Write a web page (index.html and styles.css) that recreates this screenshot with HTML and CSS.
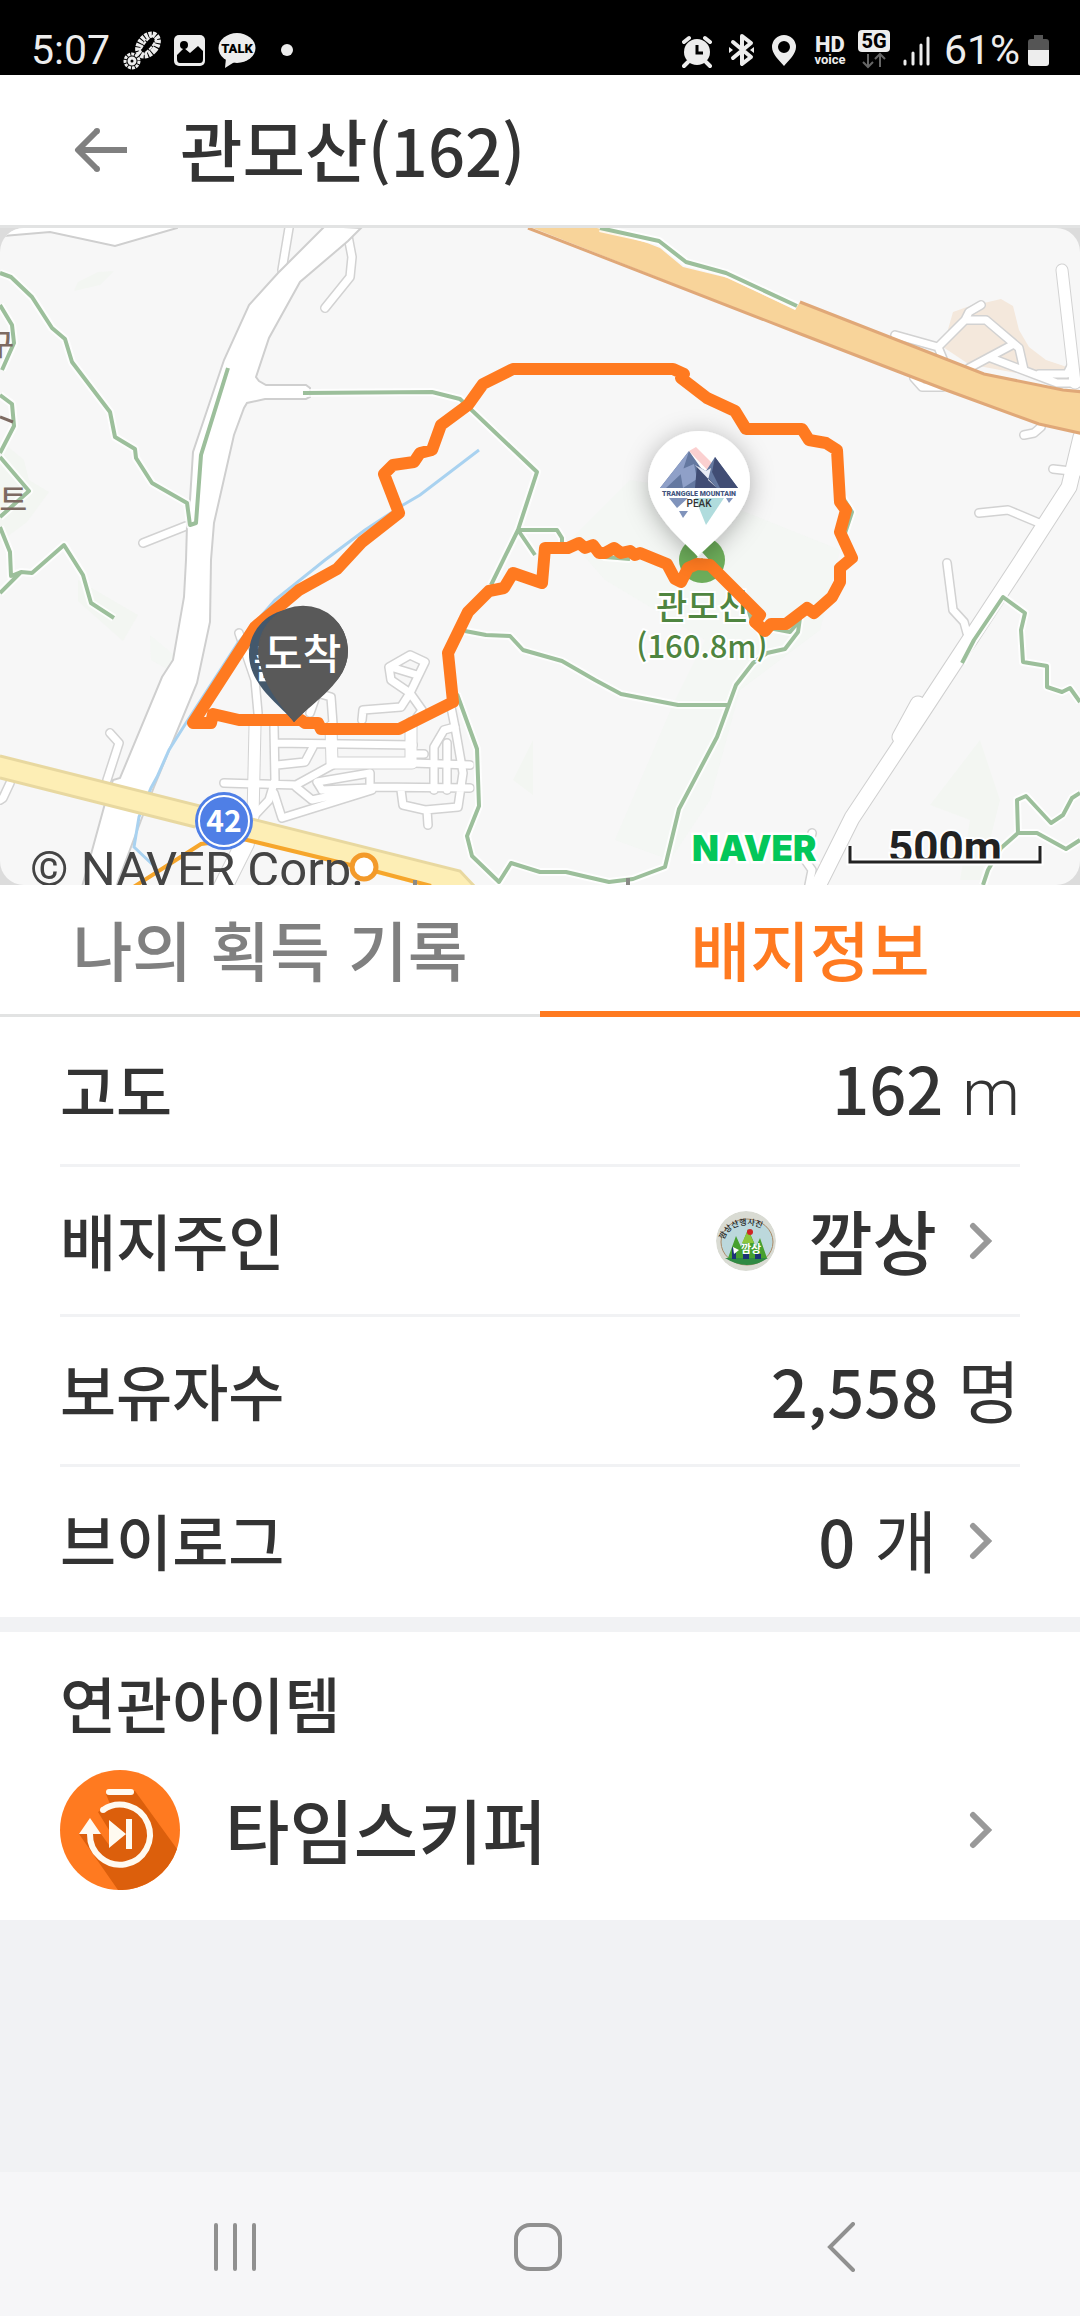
FILE: index.html
```html
<!DOCTYPE html>
<html lang="ko">
<head>
<meta charset="utf-8">
<meta name="viewport" content="width=device-width, initial-scale=1">
<title>관모산(162)</title>
<link rel="stylesheet" href="styles.css">
</head>
<body>
<div class="screen">
  <div class="status">
    <div class="status-group">
      <span class="status-text">5:07</span>
      <svg class="ic" width="38" height="40" viewBox="0 0 38 40">
        <g transform="rotate(40 25 15)" fill="none" stroke="#ededed">
          <ellipse cx="25" cy="15" rx="8" ry="12" stroke-width="6" stroke-dasharray="3 1"/>
          <path d="M23 4q-4 10 0 22M27 4q4 10 0 22" stroke-width="2" stroke-dasharray="4 1"/>
        </g>
        <circle cx="9" cy="31" r="7" fill="none" stroke="#ededed" stroke-width="3" stroke-dasharray="3 1"/>
        <circle cx="9" cy="31" r="3" fill="none" stroke="#ededed" stroke-width="3"/>
      </svg>
      <svg class="ic" width="31" height="40" viewBox="0 0 31 40">
        <rect y="5" width="31" height="31" rx="5" fill="#ededed"/>
        <circle cx="10" cy="15" r="4"/>
        <path d="M3 29v-4l7-7 6 5 8-7 5 5v8q0 4-3 4H6q-3 0-3-4z"/>
      </svg>
      <svg class="ic" width="38" height="40" viewBox="0 0 38 40">
        <ellipse cx="19" cy="18" rx="18.500" ry="15" fill="#ededed"/>
        <path d="M8 28L7 38l11-7z" fill="#ededed"/>
        <text class="talk" x="19" y="23">TALK</text>
      </svg>
      <span class="dot"></span>
    </div>
    <div class="status-group status-right">
      <svg class="ic" width="34" height="40" viewBox="0 0 34 40">
        <circle cx="15" cy="22" r="13" fill="#ededed"/>
        <path d="M2 12l5-4M23 8l5 4M6 32l-4 4M24 32l4 4" stroke="#ededed" stroke-width="4" stroke-linecap="round"/>
        <path d="M15 15v8h6" fill="none" stroke="#000" stroke-width="3"/>
      </svg>
      <svg class="ic" width="32" height="40" viewBox="0 0 32 40">
        <path d="M5 12l18 15-9 7V6l9 7L5 28" fill="none" stroke="#ededed" stroke-width="4" stroke-linejoin="round" stroke-linecap="round"/>
        <path d="M1 17l4 3-4 3zM26 17l-4 3 4 3z" fill="#ededed"/>
      </svg>
      <svg class="ic" width="30" height="40" viewBox="0 0 30 40">
        <path fill-rule="evenodd" fill="#ededed" d="M12 5a12 12 0 0 1 12 12c0 7-7 13-12 19C7 30 0 24 0 17A12 12 0 0 1 12 5zm0 6a6 6 0 1 0 0 12 6 6 0 0 0 0-12z"/>
      </svg>
      <svg class="ic" width="32" height="40" viewBox="0 0 32 40">
        <text class="hd" x="16" y="22">HD</text>
        <text class="voice" x="16" y="34">voice</text>
      </svg>
      <svg class="ic" width="32" height="40" viewBox="0 0 32 40">
        <rect width="32" height="22" rx="4" fill="#ededed"/>
        <text class="fiveg" x="16" y="18">5G</text>
        <path d="M10 24v13M5 32l5 5 5-5M22 37V24M17 29l5-5 5 5" fill="none" stroke="#666" stroke-width="2"/>
      </svg>
      <svg class="ic" width="30" height="40" viewBox="0 0 30 40">
        <path d="M3 31v3M11 23v11M19 15v19M26 8v26" stroke="#ededed" stroke-width="3" stroke-linecap="round"/>
      </svg>
      <span class="battery">
        <span class="status-text">61%</span>
        <svg class="ic" width="21" height="40" viewBox="0 0 21 40">
          <path d="M6 5h9v4h3q3 0 3 3v8H0v-8q0-3 3-3h3z" fill="#555"/>
          <path d="M0 20h21v13q0 3-3 3H3q-3 0-3-3z" fill="#ededed"/>
        </svg>
      </span>
    </div>
  </div>

  <header class="header">
    <button class="back" type="button" aria-label="뒤로">
      <svg width="54" height="44" viewBox="0 0 54 44"><path d="M53 22H5M23 3L4 22l19 19" fill="none" stroke="#808080" stroke-width="6" stroke-linejoin="round"/><path d="M23 3h0M23 41h0" stroke="#808080" stroke-width="6" stroke-linecap="round"/></svg>
    </button>
    <h1 class="title">관모산<span class="num">(162)</span></h1>
  </header>

  <div class="map">
    <svg class="map-svg" viewBox="0 228 1080 657" preserveAspectRatio="xMidYMid slice" role="img" aria-label="관모산 등산 지도">
      <defs>
        <filter id="shadow" x="-50%" y="-50%" width="200%" height="200%"><feDropShadow dx="0" dy="4" stdDeviation="12" flood-color="#000" flood-opacity="0.3"/></filter>
        <g id="lanes">
          <path d="M289 228l-7 42M348 236l4 21-2 20-25 31M143 543l43-17M110 733l9 10-12 37M10 783l-7 15-3 2"/>
          <path d="M239 633l16 47 3 33M274 727l1 53-6 20-16 17M275 743l138 2M277 765l28-3 8-15M224 783l72 2 40-22h77l57 2M413 754h11"/>
          <path d="M296 787l16 13 60-13 98 1M274 793l8 25 90-28M322 790l-5-8 53-9v15l-48 2M401 790l2 15 22 5 33-3 5-34-8-46-4-20M427 810l1 15"/>
          <path d="M362 720l1-10 38-3 9-14-19-13-2-13 21-12 15 7-15 31 12 17-9 13M394 668l23 7M434 790v-43l10-17 11-3M447 790v-47M310 713l7-20 14 4 2 27"/>
          <path d="M981 305l-12 7-4 8-27 27-43-12M938 347l5 12M965 320h21l33 28 5 22M969 368l43-23M991 358l66 25h23M1039 374h28l4-8M914 378l8 9h21M1024 435l10-2 7-6"/>
          <path d="M1053 469l27 3M979 513l29-3 31 13M947 563l6 47 11 12 3 11M812 833l-7 27 7 10-3 15"/>
        </g>
        <g id="avenues">
          <path d="M255 726l-2 91M331 727l1 36M411 723v40M332 763h80M1062 270l13 113"/>
        </g>
        <g id="trails">
          <path d="M0 273l11 4 21 20 20 31 13 11 7 23 38 50 5 25 20 12 1 9 16 25 35 20 3 22 6-2 5-68 27-87"/>
          <path d="M0 305l12 20 2 18-12 27M0 395l12 9 2 22-14 27M0 457l29 34-29 26M0 527l10 25 1 24 10-4 11 1 32-28 19 30 8 28 23 15M21 572l-21 21"/>
          <path d="M303 393l129-1 28 7 77 73-19 58-27 55M518 530l39 0 5 8v12M518 530l17 25M600 228l59 13 27 21 40 11 71 33"/>
          <path d="M465 631l21 4 24 1 13 14 39 11 33 19 26 14 57 11h50M747 605l6 20 37 7 10-12M800 618l-2 14-13 17-18 4-14 10-17 22-19 52-38 72-14 58-32 12-24 3-43-10h-26l-29-9-12 19-27-26-5-20 12-30-2-57-20-55"/>
          <path d="M962 663l12-23 29-43 22 16-4 17 2 32 24 4v21l15 5 8-4 10 14M1080 793l-8 5-9 17-12 8-25-27-9 4 1 33h19l29 16 14-9M1018 833l-17 15-13 22-5 15"/>
          <path d="M838 490l14 22-8 24M590 548l15 9 25 2"/>
        </g>
      </defs>

      <rect y="228" width="1080" height="657" fill="#f7f7f7"/>
      <g fill="#f3f6f2">
        <path d="M78 282l20-10 16-1-14 14-26 6zM0 440l24 20 5 20 20 12-22 30-27 20zM78 580l60 35-15 26-45-40z"/>
        <path d="M150 635l24 20-5 15-18-10zM570 540l60-60 60 10 150 60-20 80-80 60-30 110-40 60-55-20 60-140 30-60-100-60z" opacity=".8"/>
        <path d="M980 740l20 60-20 80h-20l10-60-40-15zM513 780l20-40v55z"/>
      </g>
      <path d="M943 347l10-35 14-5 34-8 12 7 6 24 10 17 17 13 21 7 5 16-88-16-17-4z" fill="#f4e8dc"/>

      <g fill="none" stroke-linecap="round" stroke-linejoin="round">
        <use href="#lanes" stroke="#d2d2d2" stroke-width="10"/>
        <use href="#avenues" stroke="#d2d2d2" stroke-width="13"/>
        <path d="M1081 437l-12 50-47 73-103 157-67 101-35 70M918 704l-18 33" stroke="#cfcfcf" stroke-width="17"/>
        <use href="#lanes" stroke="#fff" stroke-width="7"/>
        <use href="#avenues" stroke="#fff" stroke-width="11"/>
        <path d="M1081 437l-12 50-47 73-103 157-67 101-35 70M918 704l-18 33" stroke="#fff" stroke-width="15"/>
        <path d="M245 843l-22 44" stroke="#d2d2d2" stroke-width="20"/>
        <path d="M245 843l-22 44" stroke="#fff" stroke-width="18"/>
      </g>
      <path d="M3 236l47-4 65 14 62-18v-4H10z" fill="#fff" stroke="#cfcfcf" stroke-width="2"/>
      <path d="M325 226l-38 38-9 9-29 32-25 55-31 92-3 48-3 25-1 35-2 37-11 63-11 17-42 101-7 2-9 27-22 80h34l27-72 11-28 43-104 13-61 1-62 3-37 20-88 10-27 3-5 18-4h41l4-2v-9l-4-3h-40l-7-4-3-4 13-39 31-56 48-41 13-13z" fill="#fff" stroke="#cfcfcf" stroke-width="2"/>

      <path d="M479 450l-59 45-17 10-38 25-40 30-50 40-37 43-52 80-17 27-12 27-6 11-12 29-5 30 19 18" fill="none" stroke="#a9d2f0" stroke-width="3"/>
      <path d="M528 226l270 107 148 57 93 34 45 10v-42l-21-2-79-16-184-72-5 8-67-32-45-11-23-19-13-5-60-18z" fill="#f8d49a"/>
      <path d="M528 228l270 105 148 57 93 34 45 10M800 302l184 72 79 16 21 2" fill="none" stroke="#e0a878" stroke-width="3"/>
      <path d="M0 756l460 115 15 16h-48L195 827 0 778z" fill="#fdeeb5"/>
      <path d="M0 756l460 115 15 16M0 778l195 49" fill="none" stroke="#e8d8a0" stroke-width="3"/>
      <path d="M132 888l69-44 42-5 120 29 68 18" fill="none" stroke="#f6a62c" stroke-width="4"/>
      <circle cx="364" cy="867" r="12" fill="#fff" stroke="#f39a2a" stroke-width="5"/>
      <g fill="none" stroke-linejoin="round">
        <use href="#trails" stroke="#fff" stroke-width="8" opacity=".8"/>
        <use href="#trails" stroke="#9cbf9b" stroke-width="4"/>
      </g>
      <path d="M0 417l13 5" stroke="#7d6a62" stroke-width="3"/>
      <path d="M415 880v6M628 878v8" stroke="#8a8a86" stroke-width="4"/>
      <text class="place" x="14" y="355">구</text>
      <text class="place" x="27" y="510">트</text>

      <circle cx="224" cy="821" r="29" fill="#4f7fe6"/>
      <circle cx="224" cy="821" r="25" fill="none" stroke="#fff" stroke-width="2"/>
      <text class="route-no" x="224" y="832">42</text>

      <circle cx="702" cy="560" r="23" fill="#6dad5a"/>
      <path d="M684 575l18-20 18 20" fill="none" stroke="#fff" stroke-width="4"/>
      <text class="peak" x="703" y="619">관모산</text>
      <text class="peak peak-height" x="702" y="658">(160.8m)</text>

      <path d="M513 369l-30 15-15 21-27 20-9 25-12 3-6 9-21 3-9 9 15 39-37 29-25 27-38 21-44 37-62 96h18l2-9 26 6h62l4 3h13l3 6h78l54-27-5-49 20-41 21-21 15-3 9-15 29 10 3-35h23l11-5 6 5 8-3 6 8h6l9-5 7 5 9-2 5 4 5-2 27 11 8 15 6 3 7-14 9-4 13 1 50 50-5 7 10 9 6-7h15l21-16 7 5 18-16 8-15v-14l12-10-12-26 6-22-6-8-3-52-11-7-17-3-7-11h-56l-11-18-28-13-26-20 3-4-11-5z" fill="none" stroke="#ff7a20" stroke-width="12" stroke-linejoin="round"/>

      <path d="M294 722C282 706 249 686 249 654a45 45 0 0 1 90 0c0 32-33 52-45 68z" fill="#43586c"/>
      <text class="flag" x="253" y="678">출</text>
      <path d="M294 722l-26-43a45 45 0 1 1 70 0z" fill="#595959"/>
      <path d="M294 722C284 708 259 685 259 651a44.500 44.500 0 0 1 89 0c0 31-34 50-54 71z" fill="#595959"/>
      <text class="flag" x="264" y="669">도착</text>

      <path filter="url(#shadow)" d="M698 557c-6-9-50-41-50-75a51 51 0 0 1 102 0c0 34-46 66-52 75z" fill="#fff"/>
      <path d="M689 451l7-4 22 22-4 8z" fill="#fbd0d0"/>
      <path d="M660 488l29-37 12 17 5 3 9-14 23 31z" fill="#6478a0"/>
      <path d="M689 451l-7 22-16 15h-6zM680 470l14-6 3 15-14 9z" fill="#8fa0c8"/>
      <path d="M697 465l20 23h-22zM715 457l23 31h-18l-8-16z" fill="#414d74"/>
      <path d="M706 471l5-3-3 12 9 8-22-23z" fill="#e9ecf5"/>
      <path d="M669 498h19l-11 10zM679 511h9l-5 7zM726 498h7l-4 5z" fill="#8093bb"/>
      <path d="M695 498h29l-18 27z" fill="#b0dcdd"/>
      <text class="logo-name" x="699" y="496">TRANGGLE MOUNTAIN</text>
      <text class="logo-peak" x="699" y="507">PEAK</text>

      <text class="naver" x="692" y="861">NAVER</text>
      <text class="scale" x="945" y="863">500m</text>
      <path d="M886 859h118v4H886z" fill="#f7f7f7" opacity=".7"/>
      <path d="M850 846v16h190v-16" fill="none" stroke="#fff" stroke-width="7"/>
      <path d="M850 846v16h190v-16" fill="none" stroke="#222" stroke-width="3"/>
      <text class="credit" x="30" y="886">© NAVER Corp.</text>
    </svg>
  </div>

  <div class="tabs" role="tablist">
    <button class="tab" type="button" role="tab" aria-selected="false">나의 획득 기록</button>
    <button class="tab tab-active" type="button" role="tab" aria-selected="true">배지정보</button>
  </div>

  <main>
    <section class="card">
      <div class="row"><span class="label">고도</span><span class="value"><span class="num">162</span> <span class="unit-m">m</span></span></div>
      <a class="row" href="#owner"><span class="label">배지주인</span>
        <svg class="avatar" width="60" height="60" viewBox="0 0 60 60">
          <circle cx="30" cy="30" r="30" fill="#d9dbd3"/>
          <ellipse cx="31" cy="31" rx="26" ry="23" fill="#bcd8dc" stroke="#a98a68" stroke-width="1"/>
          <path d="M9 47q22 14 43 0z" fill="#2f8a43"/>
          <path d="M12 47l8-22 5 11 7-18 8 18 4-9 7 20z" fill="#46a02f"/>
          <path d="M26 32l6-13 6 13z" fill="#8cc63c"/>
          <circle cx="34" cy="21" r="3" fill="#d02525"/>
          <path d="M16 36l4 3v9h-4zM27 43h6v5h-6zM39 43h6v5h-6z" fill="#1d3277"/>
          <path d="M17 36l6 3-5 4z" fill="#fff"/>
          <path id="arc" d="M8 29Q13 14 31 14T55 29" fill="none"/>
          <text class="av-arc"><textPath href="#arc">깜상산행사진</textPath></text>
          <text class="av-mid" x="35" y="42">깜상</text>
        </svg>
        <span class="value name">깜상</span>
        <svg class="chev" width="24" height="38" viewBox="0 0 24 38"><path d="M4 4l15 15L4 34" /></svg></a>
      <div class="row"><span class="label">보유자수</span><span class="value"><span class="num">2,558</span> <span class="unit">명</span></span></div>
      <a class="row" href="#vlog"><span class="label">브이로그</span><span class="value"><span class="num">0</span> <span class="unit">개</span></span>
        <svg class="chev" width="24" height="38" viewBox="0 0 24 38"><path d="M4 4l15 15L4 34" /></svg></a>
    </section>

    <section class="related">
      <h2 class="label heading">연관아이템</h2>
      <a class="item" href="#timeskipper">
        <svg width="120" height="120" viewBox="0 0 120 120">
          <circle cx="60" cy="60" r="60" fill="#ff7a20"/>
          <path d="M46 24l29-3 42 58a60 60 0 0 1-59 41L19 64h22l8 11V60L38 42l12-8z" fill="#dc5f0c"/>
          <rect x="46" y="19" width="28" height="6" rx="3" fill="#fffaf0"/>
          <path d="M43 40a30 30 0 1 1-13 24" fill="none" stroke="#fffaf0" stroke-width="6"/>
          <circle cx="43" cy="40" r="3" fill="#fffaf0"/>
          <path d="M19 64l11-16 11 16zM49 50v28l17-14zM66 49h6v30h-6z" fill="#fffaf0"/>
        </svg>
        <span class="value name item-name">타임스키퍼</span>
        <svg class="chev" width="24" height="38" viewBox="0 0 24 38"><path d="M4 4l15 15L4 34" /></svg>
      </a>
    </section>
  </main>

  <nav class="sysnav">
    <button type="button" aria-label="최근 앱"><svg width="46" height="50" viewBox="0 0 46 50"><path d="M4 3v44M23 3v44M42 3v44"/></svg></button>
    <button type="button" aria-label="홈"><svg width="50" height="50" viewBox="0 0 50 50"><rect x="3" y="3" width="44" height="44" rx="14"/></svg></button>
    <button type="button" aria-label="뒤로"><svg width="30" height="50" viewBox="0 0 30 50"><path d="M27 2L4 25l23 23"/></svg></button>
  </nav>
</div>
</body>
</html>
```
FILE: styles.css
```css
* { box-sizing: border-box; }

body {
  margin: 0;
  background: #f1f2f4;
  color: #333;
  font-family: "Noto Sans CJK KR", "Noto Sans", sans-serif;
  font-weight: 500;
}

button {
  border: 0;
  padding: 0;
  background: none;
  color: inherit;
  font: inherit;
}

a { color: inherit; text-decoration: none; }
svg { display: block; flex: none; }

.screen {
  display: flex;
  flex-direction: column;
  min-height: 100vh;
}

/* Status bar */
.status {
  display: flex;
  justify-content: space-between;
  align-items: flex-end;
  height: 75px;
  padding: 0 31px 5px;
  background: #000;
}
.status-group { display: flex; align-items: center; gap: 13px; }
.status-right { gap: 12px; }
.battery { display: flex; gap: 8px; }
.status-text {
  color: #ededed;
  font: 400 41px/40px Roboto, sans-serif;
}
.dot {
  width: 12px;
  height: 12px;
  margin-left: 12px;
  border-radius: 50%;
  background: #ededed;
}
.talk { font: 900 13px Roboto, sans-serif; text-anchor: middle; }
.hd { font: 800 22px Roboto, sans-serif; text-anchor: middle; fill: #ededed; }
.voice { font: 700 13px Roboto, sans-serif; text-anchor: middle; fill: #ededed; }
.fiveg { font: 800 20px Roboto, sans-serif; text-anchor: middle; }

/* Title bar */
.header {
  display: flex;
  align-items: center;
  gap: 52px;
  height: 153px;
  padding-left: 74px;
  border-bottom: 3px solid #e2e3e3;
  background: #fff;
}
.title {
  margin: 0;
  padding-bottom: 4px;
  font-size: 68px;
  font-weight: 500;
  line-height: 96px;
}
.num { font-size: 65px; }

/* Map */
.map { background: #dcdcdc; }
.map-svg {
  width: 100%;
  aspect-ratio: 1080 / 657;
  border-radius: 24px;
}
.place { font-size: 30px; fill: #7d6a62; text-anchor: end; }
.route-no { font: 700 30px "Noto Sans CJK KR", sans-serif; fill: #fff; text-anchor: middle; }
.peak {
  font-size: 34px;
  fill: #4f8540;
  stroke: #fff;
  stroke-width: 4px;
  paint-order: stroke;
  text-anchor: middle;
}
.peak-height { font-size: 31px; }
.flag { font-size: 42px; fill: #fff; }
.logo-name { font: 900 7px Roboto, sans-serif; fill: #44557f; text-anchor: middle; }
.logo-peak { font: 500 10px Roboto, sans-serif; fill: #333; text-anchor: middle; }
.naver {
  font: 900 35px Inter, sans-serif;
  fill: #03c75a;
  stroke: #fff;
  stroke-width: 5px;
  paint-order: stroke;
}
.scale {
  font: 700 44px Roboto, sans-serif;
  fill: #222;
  stroke: #fff;
  stroke-width: 4px;
  paint-order: stroke;
  text-anchor: middle;
}
.credit { font: 400 49px Roboto, sans-serif; fill: #444; }

/* Tabs */
.tabs {
  display: grid;
  grid-template-columns: 1fr 1fr;
  height: 132px;
  background: #fff;
}
.tab {
  padding-bottom: 3px;
  border-bottom: 3px solid #e2e3e3;
  color: #808080;
  font-size: 65px;
  line-height: 90px;
}
.tab-active {
  padding-bottom: 0;
  border-bottom: 6px solid #ff7a20;
  color: #ff7a20;
}

/* Badge details */
.card {
  padding: 0 60px;
  background: #fff;
}
.row {
  display: flex;
  align-items: center;
  height: 150px;
  border-bottom: 3px solid #f1f2f4;
}
.row:last-child { border-bottom-color: transparent; }
.label {
  margin-right: auto;
  padding-bottom: 2px;
  font-size: 61px;
  line-height: 82px;
}
.value {
  padding-bottom: 2px;
  font-size: 68px;
  line-height: 98px;
}
.unit { font-weight: 400; }
.unit-m { font-family: Roboto, sans-serif; font-size: 65px; font-weight: 300; }
.name { font-size: 70px; }
.avatar {
  margin-right: 32px;
  border-radius: 50%;
}
.av-arc { font-size: 8px; fill: #222; }
.av-mid { font-size: 11px; font-weight: 700; fill: #fff; text-anchor: middle; }
.chev {
  margin: 0 27px 0 32px;
  fill: none;
  stroke: #999;
  stroke-width: 6px;
  stroke-linecap: round;
}

/* Related item */
.related {
  margin-top: 15px;
  padding: 30px 60px;
  background: #fff;
}
.heading { margin: 0 0 24px; font-weight: 500; }
.item { display: flex; align-items: center; }
.item-name { margin: 0 auto 0 45px; }

/* System navigation */
.sysnav {
  display: grid;
  grid-template-columns: repeat(3, 1fr);
  height: 144px;
  margin-top: auto;
  padding: 6px 88px 0 84px;
  background: #f6f6f8;
}
.sysnav button { display: grid; place-items: center; }
.sysnav svg {
  fill: none;
  stroke: #909090;
  stroke-width: 4px;
  stroke-linecap: round;
}
```
